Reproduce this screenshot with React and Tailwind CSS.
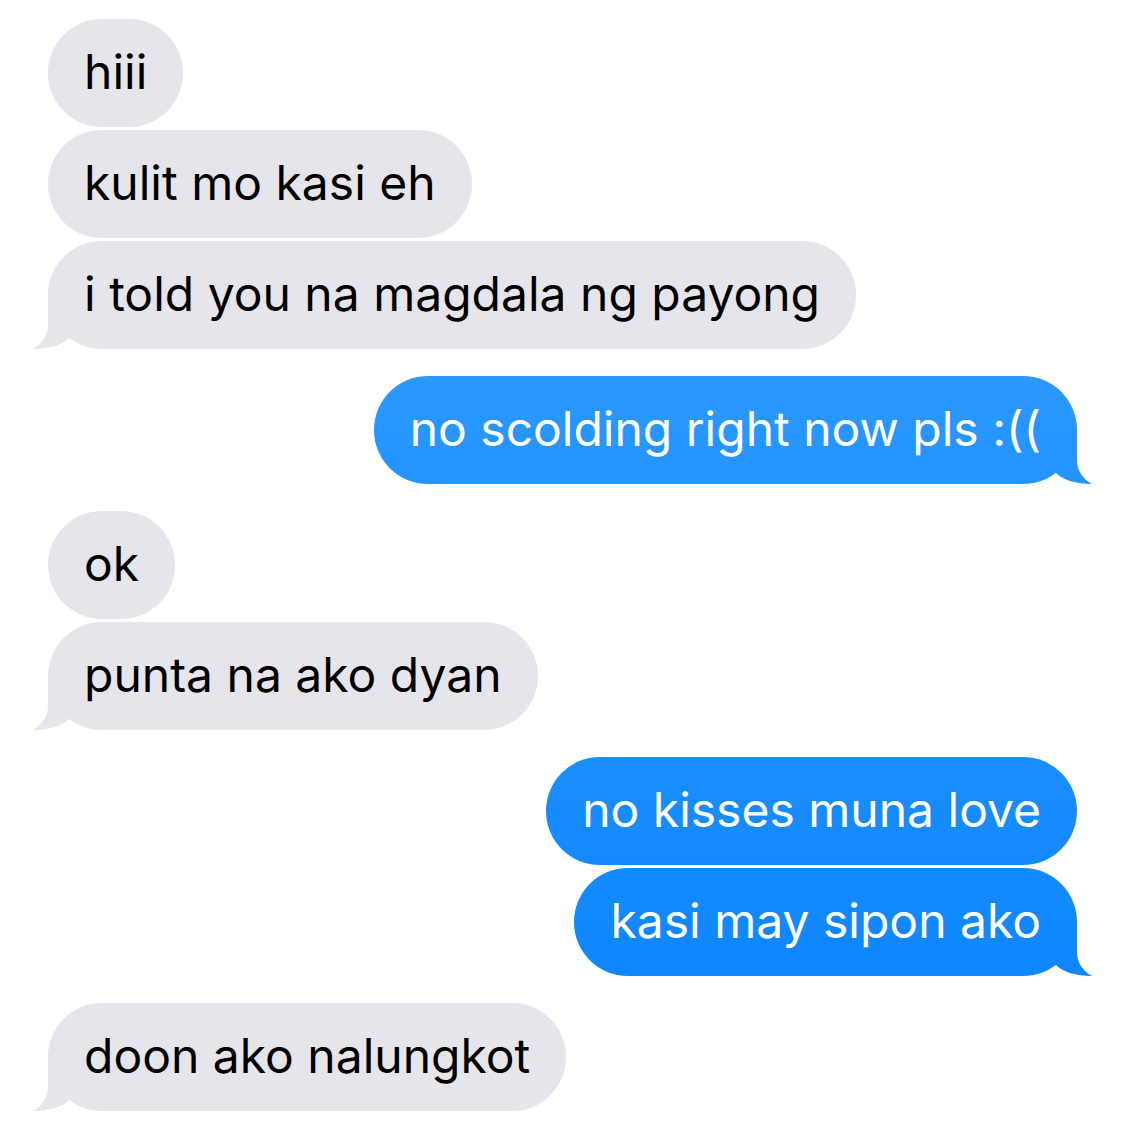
import React from "react";

const groups = [
  { id: 1, from: "them", messages: [{ text: "hiii" }, { text: "kulit mo kasi eh" }, { text: "i told you na magdala ng payong" }] },
  { id: 2, from: "me", messages: [{ text: "no scolding right now pls :((", color: "from-[#2a98ff] to-[#2494ff]", tail: "text-[#2494ff]" }] },
  { id: 3, from: "them", messages: [{ text: "ok" }, { text: "punta na ako dyan" }] },
  {
    id: 4,
    from: "me",
    messages: [
      { text: "no kisses muna love", color: "from-[#198eff] to-[#158aff]", tail: "text-[#158aff]" },
      { text: "kasi may sipon ako", color: "from-[#148aff] to-[#1086ff]", tail: "text-[#1086ff]" },
    ],
  },
  { id: 5, from: "them", messages: [{ text: "doon ako nalungkot" }] },
];

// Drawn for the left side, mirrored for my own bubbles
const Tail = ({ className }) => (
  <svg viewBox="0 0 60 54" className={`absolute bottom-0 w-[60px] h-[54px] ${className}`} fill="currentColor" aria-hidden="true">
    <path d="M15 0 V30 C15 41 9 49 0 54 C16 54 29 50 36 43 L40 36 Z" />
  </svg>
);

const Bubble = ({ message, mine, last }) => (
  <li
    className={`relative rounded-[54px] px-9 pt-[21px] pb-[23px] ${
      mine ? `bg-linear-to-b text-white ${message.color}` : "bg-[#e6e5eb] text-black"
    }`}
  >
    {last && <Tail className={mine ? `-right-[15px] -scale-x-100 ${message.tail}` : "-left-[15px] text-[#e6e5eb]"} />}
    <p className="relative text-5xl leading-[64px]">{message.text}</p>
  </li>
);

const App = () => {
  return (
    <main className="bg-white px-12 pt-[19px] pb-[33px] flex flex-col gap-[27px] font-['Inter',sans-serif]">
      {groups.map((group) => (
        <ul key={group.id} className={`flex flex-col gap-[3px] ${group.from === "me" ? "items-end" : "items-start"}`}>
          {group.messages.map((message, i) => (
            <Bubble
              key={message.text}
              message={message}
              mine={group.from === "me"}
              last={i === group.messages.length - 1}
            />
          ))}
        </ul>
      ))}
    </main>
  );
};

export default App;
